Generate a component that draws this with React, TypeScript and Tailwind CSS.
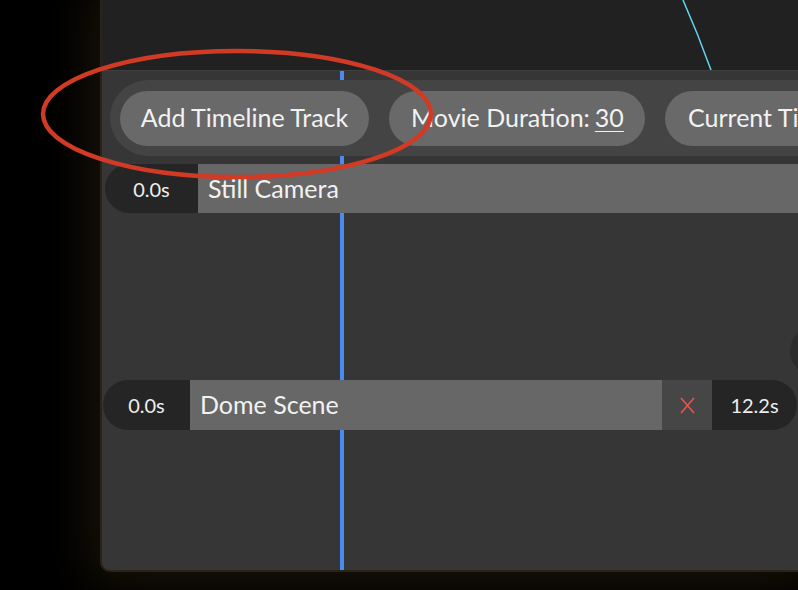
import React from "react";

const TimeCap = ({ label, side, width }: { label: string; side: "l" | "r"; width: string }) => (
  <div
    className={`flex h-full ${width} shrink-0 items-center justify-center bg-[#252525] text-[20px] text-[#eeeeee] ${
      side === "l" ? "rounded-l-full" : "rounded-r-full"
    }`}
  >
    {label}
  </div>
);

export default function App() {
  return (
    <div className="relative h-[590px] w-[798px] overflow-hidden bg-black font-['Lato',sans-serif] text-[#f2f2f2]">
      {/* app window */}
      <div className="ml-[100px] flex h-[572px] w-[698px] flex-col overflow-hidden rounded-bl-[10px] border-b-2 border-l-2 border-[#2b2416] bg-[#212121] shadow-[0_0_45px_12px_rgba(45,34,14,0.55)]">
        {/* scene view */}
        <div className="relative h-[70px] shrink-0">
          <svg className="absolute left-0 top-0" width="698" height="70">
            <path d="M581 0 Q596 34 609 70" stroke="#62d5f2" strokeWidth="1.5" fill="none" />
          </svg>
        </div>

        {/* timeline panel */}
        <div className="relative flex-1 border-t border-[#3f3f3f] bg-[#363636]">
          <div className="absolute bottom-0 left-[238px] top-0 w-1 bg-[#4a8af5]" />
          <div className="absolute left-[688px] top-[255px] h-[50px] w-[50px] rounded-full bg-[#2c2c2c]" />

          {/* toolbar */}
          <div className="relative z-10 ml-2 mt-[9px] flex h-[76px] items-center gap-5 whitespace-nowrap rounded-l-full bg-[#444444] pl-[10px] text-[25px]">
            <button className="flex h-[55px] w-[249px] shrink-0 items-center justify-center rounded-full bg-[#696969]">
              Add Timeline Track
            </button>
            <button className="flex h-[55px] w-[256px] shrink-0 items-center gap-[5px] rounded-full bg-[#696969] pl-[22px]">
              Movie Duration:
              <span className="underline decoration-1 underline-offset-4">30</span>
            </button>
            <button className="flex h-[55px] w-[220px] shrink-0 items-center rounded-full bg-[#696969] pl-[23px]">
              Current Time
            </button>
          </div>

          {/* track 1 */}
          <div className="relative z-10 ml-[3px] mt-2 flex h-[49px]">
            <TimeCap label="0.0s" side="l" width="w-[93px]" />
            <div className="flex flex-1 items-center bg-[#676767] pl-[10px] text-[25px]">Still Camera</div>
          </div>

          {/* track 2 */}
          <div className="relative z-10 ml-[1px] mt-[167px] flex h-[50px] w-fit">
            <TimeCap label="0.0s" side="l" width="w-[87px]" />
            <div className="flex w-[472px] items-center bg-[#676767] pl-[10px] text-[25px]">Dome Scene</div>
            <button className="flex w-[50px] items-center justify-center bg-[#464646]">
              <svg width="15" height="17" viewBox="0 0 15 17">
                <path d="M1 1 L14 16 M14 1 L1 16" stroke="#e5534b" strokeWidth="1.7" fill="none" />
              </svg>
            </button>
            <TimeCap label="12.2s" side="r" width="w-[85px]" />
          </div>
        </div>
      </div>

      {/* annotation */}
      <svg className="pointer-events-none absolute left-0 top-0 z-20" width="798" height="590">
        <ellipse cx="237" cy="114" rx="194" ry="63" stroke="#d13b25" strokeWidth="4.5" fill="none" />
      </svg>
    </div>
  );
}
